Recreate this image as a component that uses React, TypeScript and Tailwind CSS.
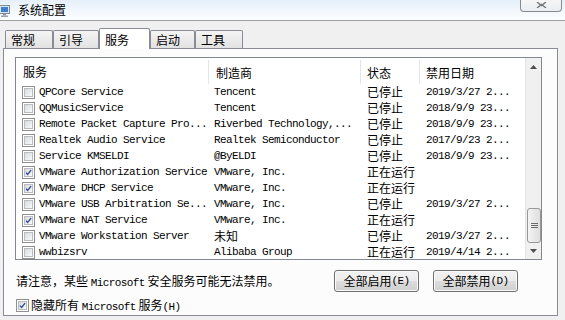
import type React from "react";

const mono = "font-['Liberation_Mono',monospace] text-[11px] tracking-[-0.6px] leading-[14px]";
const cjk = "font-['Noto_Sans_CJK_SC',sans-serif] text-[12px] leading-[14px]";

interface Row {
  name: string;
  maker: string;
  state: string;
  date: string;
  checked?: boolean;
}

const rows: Row[] = [
  { name: "QPCore Service", maker: "Tencent", state: "已停止", date: "2019/3/27 2..." },
  { name: "QQMusicService", maker: "Tencent", state: "已停止", date: "2018/9/9 23..." },
  { name: "Remote Packet Capture Pro...", maker: "Riverbed Technology,...", state: "已停止", date: "2018/9/9 23..." },
  { name: "Realtek Audio Service", maker: "Realtek Semiconductor", state: "已停止", date: "2017/9/23 2..." },
  { name: "Service KMSELDI", maker: "@ByELDI", state: "已停止", date: "2018/9/9 23..." },
  { name: "VMware Authorization Service", maker: "VMware, Inc.", state: "正在运行", date: "", checked: true },
  { name: "VMware DHCP Service", maker: "VMware, Inc.", state: "正在运行", date: "", checked: true },
  { name: "VMware USB Arbitration Se...", maker: "VMware, Inc.", state: "已停止", date: "2019/3/27 2..." },
  { name: "VMware NAT Service", maker: "VMware, Inc.", state: "正在运行", date: "", checked: true },
  { name: "VMware Workstation Server", maker: "未知", state: "已停止", date: "2019/3/27 2..." },
  { name: "wwbizsrv", maker: "Alibaba Group", state: "正在运行", date: "2019/4/14 2..." },
];

const isCjk = (s: string) => /[\u4e00-\u9fff]/.test(s);

const CheckBox = ({ checked = false }: { checked?: boolean }) => (
  <span className="flex h-[13px] w-[13px] shrink-0 border border-[#8e8f8f] bg-white p-px">
    <span className="flex h-full w-full items-center justify-center border border-[#b9bdc3] bg-[linear-gradient(135deg,#d6d9de,#fafafa)]">
      {checked && (
        <svg width="9" height="9" viewBox="0 0 9 9">
          <path d="M1.2 4.6 L3.4 7 L7.8 1.4" fill="none" stroke="#2a4a94" strokeWidth="1.7" />
        </svg>
      )}
    </span>
  </span>
);

const Tab = ({ label, width, selected = false }: { label: string; width: string; selected?: boolean }) => (
  <div
    className={`${width} ${
      selected
        ? "relative z-10 -mb-px h-[21px] bg-white pt-[1px]"
        : "h-[18px] bg-[linear-gradient(#f4f4f4,#e2e2e2)]"
    } rounded-t-[2px] border border-b-0 border-[#898c95] pl-[5px] ${cjk} flex items-center`}
  >
    {label}
  </div>
);

const Arrow = ({ up }: { up?: boolean }) => (
  <svg width="7" height="4" viewBox="0 0 7 4">
    <path d={up ? "M0 4 L3.5 0 L7 4 Z" : "M0 0 L3.5 4 L7 0 Z"} fill="#4d4d4d" />
  </svg>
);

const Button = ({ label, hotkey }: { label: string; hotkey: string }) => (
  <div className="flex h-[22px] w-[85px] items-center justify-center rounded-[3px] border border-[#707070] bg-[linear-gradient(#f2f2f2_0%,#ebebeb_50%,#dddddd_50%,#cfcfcf_100%)] shadow-[inset_0_0_0_1px_#fbfbfb]">
    <span className={cjk}>{label}</span>
    <span className={mono}>({hotkey})</span>
  </div>
);

export default function App() {
  return (
    <div className="flex h-[320px] w-[565px] flex-col overflow-hidden bg-[#f0f0f0] text-black">
      {/* title bar */}
      <div className="flex h-[21px] shrink-0 items-center border-b border-[#a0a0a0] bg-[linear-gradient(#e6f0fa,#fdfeff)]">
        <svg width="12" height="13" viewBox="0 0 12 13" className="-ml-[1px] mt-[1px]">
          <rect x="0.5" y="1.5" width="10" height="8" fill="#dbe8f5" stroke="#7f8a99" />
          <rect x="2" y="3" width="7" height="5" fill="#3d7fd0" />
          <rect x="4" y="10" width="3" height="1.5" fill="#8a93a0" />
          <rect x="2" y="11.5" width="7" height="1.5" fill="#9aa3ad" />
        </svg>
        <span className={`${cjk} ml-[7px]`}>系统配置</span>
        <div className="ml-auto mr-[3px] -mt-[9px] flex h-[13px] w-[42px] items-center justify-center rounded-b-[4px] border border-t-0 border-[#8a8a8a] bg-[linear-gradient(#f7f7f7,#e9eef3)]">
          <svg width="11" height="6" viewBox="0 0 11 6">
            <path d="M1 0 L5.5 3.6 L10 0 M1 6 L5.5 2.4 L10 6" fill="none" stroke="#777" strokeWidth="1.4" />
          </svg>
        </div>
      </div>

      {/* tabs */}
      <div className="mt-[7px] flex h-[20px] shrink-0 items-end pl-[5px]">
        <Tab label="常规" width="w-[48px]" />
        <Tab label="引导" width="w-[46px]" />
        <Tab label="服务" width="w-[51px]" selected />
        <Tab label="启动" width="w-[45px]" />
        <Tab label="工具" width="w-[48px]" />
      </div>

      {/* panel */}
      <div className="ml-[3px] flex h-[268px] w-[555px] shrink-0 flex-col border border-[#898c95] bg-[#fcfcfc] pl-[11px] pt-[8px]">
        <div className="flex h-[203px] w-[527px] shrink-0 overflow-hidden border border-[#828790] bg-white">
          <div className="flex w-[509px] flex-col">
            <div className={`flex h-[26px] shrink-0 items-center pt-[2px] ${cjk}`}>
              <div className="w-[192px] pl-[7px]">服务</div>
              <div className="h-full w-[152px] border-l border-[#e5e5e5] pl-[7px] pt-[6px]">制造商</div>
              <div className="h-full w-[59px] border-l border-[#e5e5e5] pl-[6px] pt-[6px]">状态</div>
              <div className="h-full w-[106px] border-l border-[#e5e5e5] pl-[6px] pt-[6px]">禁用日期</div>
            </div>
            {rows.map((r) => (
              <div key={r.name} className="flex h-[16px] shrink-0 items-center whitespace-nowrap">
                <div className="flex w-[192px] items-center overflow-x-clip pl-[6px]">
                  <CheckBox checked={r.checked} />
                  <span className={`${mono} ml-[4px]`}>{r.name}</span>
                </div>
                <div className={`w-[152px] pl-[6px] ${isCjk(r.maker) ? cjk : `${mono} overflow-x-clip`}`}>{r.maker}</div>
                <div className={`w-[59px] pl-[7px] ${cjk}`}>{r.state}</div>
                <div className={`w-[106px] pl-[7px] ${mono}`}>{r.date}</div>
              </div>
            ))}
          </div>
          {/* scrollbar */}
          <div className="flex w-[16px] flex-col border-l border-[#e3e3e3] bg-[#f0f0f0]">
            <div className="flex h-[17px] shrink-0 items-center justify-center">
              <Arrow up />
            </div>
            <div className="flex-1">
              <div className="ml-px mt-[133px] flex h-[35px] w-[14px] items-center justify-center rounded-[3px] border border-[#979797] bg-[linear-gradient(90deg,#f4f4f4,#dedede)]">
                <div className="flex flex-col gap-[1px]">
                  <div className="h-[1px] w-[7px] bg-[#6a6a6a]" />
                  <div className="h-[1px] w-[7px] bg-[#6a6a6a]" />
                  <div className="h-[1px] w-[7px] bg-[#6a6a6a]" />
                </div>
              </div>
            </div>
            <div className="flex h-[16px] shrink-0 items-center justify-center">
              <Arrow />
            </div>
          </div>
        </div>

        {/* notice + buttons */}
        <div className="mt-[10px] flex h-[22px] shrink-0 items-center">
          <div className="w-[319px] whitespace-pre pl-[1px] leading-[14px]">
            <span className={cjk}>请注意，某些 </span>
            <span className={mono}>Microsoft</span>
            <span className={cjk}> 安全服务可能无法禁用。</span>
          </div>
          <Button label="全部启用" hotkey="E" />
          <div className="w-[14px]" />
          <Button label="全部禁用" hotkey="D" />
        </div>

        <div className="mt-[6px] flex h-[14px] shrink-0 items-center pl-[1px]">
          <CheckBox checked />
          <span className="ml-[2px] whitespace-pre leading-[14px]">
            <span className={cjk}>隐藏所有 </span>
            <span className={mono}>Microsoft</span>
            <span className={cjk}> 服务</span>
            <span className={mono}>(H)</span>
          </span>
        </div>
      </div>
    </div>
  );
}
